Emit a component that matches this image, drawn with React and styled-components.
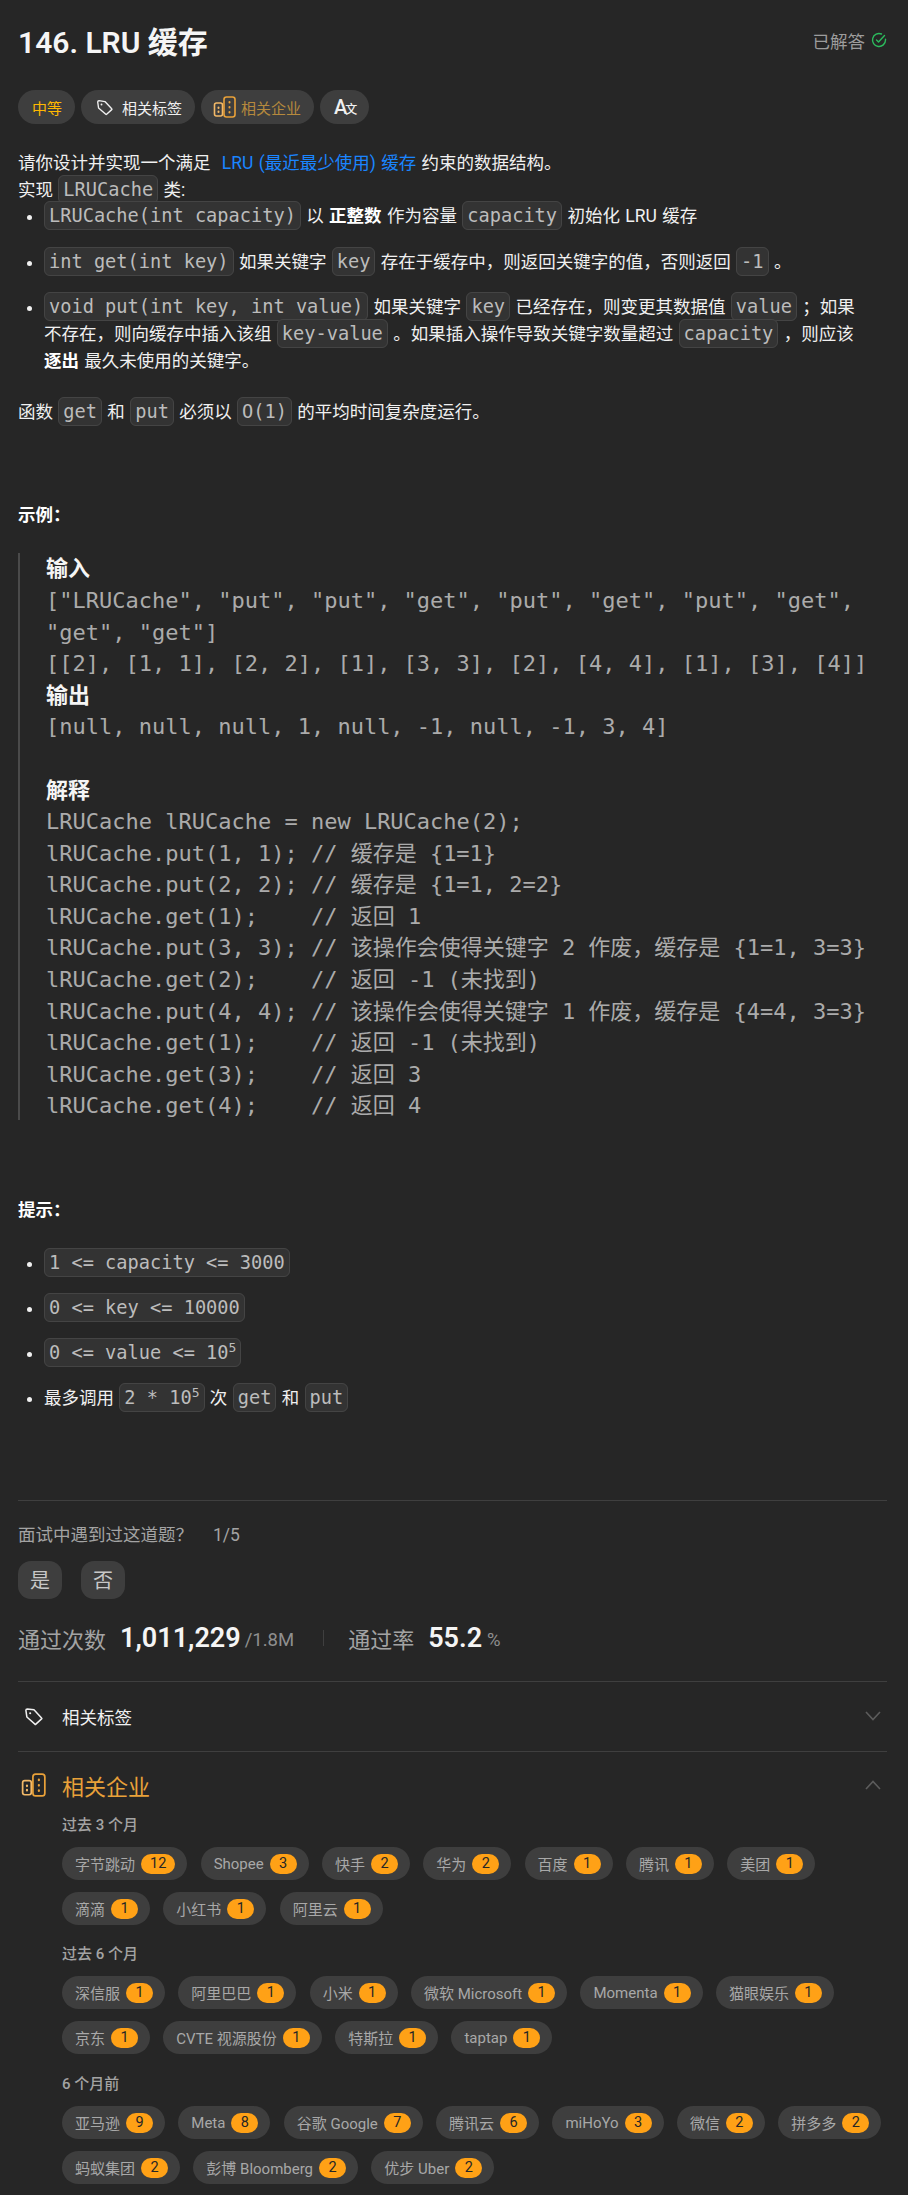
import React from "react";
import styled, { createGlobalStyle } from "styled-components";

const GlobalStyle = createGlobalStyle`
  html, body {
    margin: 0;
    padding: 0;
    background: #262626;
  }
  body {
    font-family: Roboto, "Noto Sans CJK SC", sans-serif;
    color: #eff1f6;
  }
`;

const Page = styled.div`
  width: 908px;
  height: 2195px;
  box-sizing: border-box;
  padding: 0 21px 0 18px;
  overflow: hidden;
`;

const TitleRow = styled.div`
  display: flex;
  align-items: center;
  justify-content: space-between;
  height: 42px;
  padding-top: 19px;
`;

const Title = styled.h1`
  margin: 0;
  font-size: 30px;
  font-weight: 600;
  color: #f5f5f5;
`;

const Solved = styled.div`
  display: flex;
  align-items: center;
  gap: 6px;
  font-size: 17.5px;
  color: #9c9c9c;
`;

const ChipRow = styled.div`
  display: flex;
  gap: 6px;
  margin-top: 29px;
`;

const Chip = styled.div`
  display: flex;
  align-items: center;
  gap: ${props => props.$gap || 10}px;
  height: 34px;
  padding: 0 ${props => props.$right || 13}px 0 ${props => props.$pad || 14}px;
  border-radius: 17px;
  background: #3e3e3e;
  font-size: 15px;
  color: ${props => props.$color || "#f0f0f0"};
`;

const TranslateIcon = styled.span`
  display: inline-flex;
  align-items: baseline;
  font-size: 20px;
  font-weight: 500;
  color: #f0f0f0;
  small {
    font-size: 12px;
    margin-left: -2px;
  }
`;

const Description = styled.div`
  width: 848px;
  margin-top: 26px;
  font-size: 17.5px;
  line-height: 26.6px;
  word-spacing: 1px;
  color: #f0f0f0;
`;

const Line = styled.p`
  margin: ${props => props.$top || 0}px 0 0;
`;

const Link = styled.span`
  margin-left: 6px;
  color: #1a85ff;
`;

const Strong = styled.strong`
  font-weight: 700;
  color: #fff;
`;

const Code = styled.code`
  padding: 3px 4px;
  border: 1px solid #444;
  border-radius: 6px;
  background: #333;
  font-family: "DejaVu Sans Mono", monospace;
  font-size: 18.65px;
  line-height: 1;
  word-spacing: 0;
  color: #bcbcbc;
  sup {
    font-size: 13px;
    line-height: 0;
  }
`;

const List = styled.ul`
  margin: ${props => props.$top || 0}px 0 0;
  padding: 0 0 0 26px;
`;

const Item = styled.li`
  margin-bottom: ${props => props.$gap || 19}px;
`;

const Blockquote = styled.div`
  margin-top: 25px;
  padding-left: 26px;
  border-left: 2px solid #4a4a4a;
  height: 567px;
`;

const Pre = styled.pre`
  margin: 0;
  font-family: "DejaVu Sans Mono", "Noto Sans CJK SC", monospace;
  font-size: 22px;
  line-height: 31.6px;
  color: #ababab;
  b {
    font-family: "Noto Sans CJK SC", sans-serif;
    font-size: 22px;
    font-weight: 700;
    line-height: 1;
    color: #f5f5f5;
  }
`;

const Rule = styled.hr`
  margin: ${props => props.$top || 0}px 0 0;
  border: 0;
  border-top: 1px solid #3f3f3f;
`;

const Muted = styled.div`
  display: flex;
  gap: 20px;
  margin-top: 24px;
  font-size: 17.5px;
  line-height: 20px;
  color: #a3a3a3;
`;

const VoteRow = styled.div`
  display: flex;
  gap: 19px;
  margin-top: 16px;
`;

const Vote = styled.div`
  width: 44px;
  height: 38px;
  border-radius: 13px;
  background: #3e3e3e;
  display: flex;
  align-items: center;
  justify-content: center;
  font-size: 20px;
  color: #c8c8c8;
`;

const Stats = styled.div`
  display: flex;
  align-items: center;
  height: 40px;
  margin-top: 19.5px;
`;

const StatLabel = styled.span`
  font-size: 22px;
  color: #a3a3a3;
  margin-right: 14px;
`;

const StatValue = styled.span`
  font-size: 27px;
  font-weight: 600;
  color: #f5f5f5;
`;

const StatUnit = styled.span`
  font-size: 18.5px;
  color: #8f8f8f;
  margin: 4px 0 0 ${props => props.$left || 4}px;
`;

const StatDivider = styled.span`
  width: 1px;
  height: 16px;
  margin: 0 24px 0 29px;
  background: #3f3f3f;
`;

const Accordion = styled.div`
  display: flex;
  align-items: center;
  justify-content: space-between;
  box-sizing: border-box;
  height: ${props => props.$h}px;
  padding: 0 6px ${props => props.$bottom || 0}px 0;
`;

const AccordionLabel = styled.div`
  display: flex;
  align-items: center;
  font-size: ${props => props.$size}px;
  color: ${props => props.$color};
`;

const IconSlot = styled.span`
  display: flex;
  width: 44px;
  padding-left: ${props => props.$left}px;
  box-sizing: border-box;
`;

const Companies = styled.div`
  padding-left: 44px;
`;

const Period = styled.div`
  margin-top: ${props => props.$top}px;
  font-size: 15px;
  font-weight: 500;
  line-height: 20px;
  color: #a3a3a3;
`;

const Pills = styled.div`
  display: flex;
  flex-wrap: wrap;
  gap: 12.5px 13.3px;
  margin-top: 12.5px;
`;

const Pill = styled.div`
  display: flex;
  align-items: center;
  gap: 6px;
  height: 32.5px;
  padding: 0 12px 0 13px;
  border-radius: 17px;
  background: #3e3e3e;
  font-size: 15px;
  color: #a8a8a8;
  white-space: nowrap;
`;

const Badge = styled.span`
  box-sizing: border-box;
  min-width: 27px;
  height: 20px;
  padding: 0 9px;
  border-radius: 10px;
  background: #ffa116;
  color: #262626;
  font-size: 14.5px;
  line-height: 20px;
  text-align: center;
`;

const TagIcon = ({ size = 18, color = "#f0f0f0" }) => (
  <svg width={size} height={size} viewBox="0 0 20 20" fill="none" stroke={color} strokeWidth="1.6" strokeLinejoin="round">
    <path d="M2 3.5 Q2 2 3.5 2 L10.5 3 L18.5 11.5 Q19 12 18.5 12.5 L12.5 18 Q12 18.5 11.5 18 L3 10.5z" />
    <circle cx="6.5" cy="6.5" r="1.1" fill={color} stroke="none" />
  </svg>
);

const CompanyIcon = ({ size = 24 }) => (
  <svg width={size} height={size} viewBox="0 0 24 24" fill="none" stroke="#e9a139" strokeWidth="1.6" strokeLinecap="round" strokeLinejoin="round">
    <rect x="1.5" y="8" width="8" height="13" rx="2" stroke="#f3b968" />
    <rect x="11" y="2" width="11" height="20" rx="2.5" />
    <path d="M16.5 7v.5M16.5 12v.5M16.5 17v.5" strokeWidth="2" />
    <path d="M5.5 12.5v.5M5.5 16.5v.5" strokeWidth="2" stroke="#f3b968" />
  </svg>
);

const CheckIcon = () => (
  <svg width="16" height="16" viewBox="0 0 16 16" fill="none" stroke="#2cbb5d" strokeWidth="1.4" strokeLinecap="round" strokeLinejoin="round">
    <path d="M14.5 7.2V8A6.5 6.5 0 1 1 10.5 2" />
    <path d="M5.5 8l2 2L13.5 3.5" />
  </svg>
);

const Chevron = ({ up }) => (
  <svg width="16" height="10" viewBox="0 0 16 10" fill="none" stroke="#5c5c5c" strokeWidth="1.6">
    <path d={up ? "M1 9 8 1.5 15 9" : "M1 1l7 7.5L15 1"} />
  </svg>
);

const periods = [
  {
    label: "过去 3 个月",
    top: -7,
    items: [["字节跳动", 12], ["Shopee", 3], ["快手", 2], ["华为", 2], ["百度", 1], ["腾讯", 1], ["美团", 1], ["滴滴", 1], ["小红书", 1], ["阿里云", 1]],
  },
  {
    label: "过去 6 个月",
    top: 19,
    items: [["深信服", 1], ["阿里巴巴", 1], ["小米", 1], ["微软 Microsoft", 1], ["Momenta", 1], ["猫眼娱乐", 1], ["京东", 1], ["CVTE 视源股份", 1], ["特斯拉", 1], ["taptap", 1]],
  },
  {
    label: "6 个月前",
    top: 20,
    items: [["亚马逊", 9], ["Meta", 8], ["谷歌 Google", 7], ["腾讯云", 6], ["miHoYo", 3], ["微信", 2], ["拼多多", 2], ["蚂蚁集团", 2], ["彭博 Bloomberg", 2], ["优步 Uber", 2]],
  },
];

const example = `["LRUCache", "put", "put", "get", "put", "get", "put", "get",
"get", "get"]
[[2], [1, 1], [2, 2], [1], [3, 3], [2], [4, 4], [1], [3], [4]]
`;

const explain = `LRUCache lRUCache = new LRUCache(2);
lRUCache.put(1, 1); // 缓存是 {1=1}
lRUCache.put(2, 2); // 缓存是 {1=1, 2=2}
lRUCache.get(1);    // 返回 1
lRUCache.put(3, 3); // 该操作会使得关键字 2 作废，缓存是 {1=1, 3=3}
lRUCache.get(2);    // 返回 -1 (未找到)
lRUCache.put(4, 4); // 该操作会使得关键字 1 作废，缓存是 {4=4, 3=3}
lRUCache.get(1);    // 返回 -1 (未找到)
lRUCache.get(3);    // 返回 3
lRUCache.get(4);    // 返回 4`;

export default function App() {
  return (
    <Page lang="zh-CN">
      <GlobalStyle />
      <TitleRow>
        <Title>146. LRU 缓存</Title>
        <Solved>
          已解答 <CheckIcon />
        </Solved>
      </TitleRow>

      <ChipRow>
        <Chip $color="#ffb800">中等</Chip>
        <Chip $pad={15} $gap={9}><TagIcon size={17} /> 相关标签</Chip>
        <Chip $gap={4} $pad={12} $color="#b5893d"><CompanyIcon size={24} /> 相关企业</Chip>
        <Chip $right={12}><TranslateIcon>A<small>文</small></TranslateIcon></Chip>
      </ChipRow>

      <Description>
        <Line>请你设计并实现一个满足 <Link>LRU (最近最少使用) 缓存</Link> 约束的数据结构。</Line>
        <Line>实现 <Code>LRUCache</Code> 类:</Line>
        <List>
          <Item><Code>LRUCache(int capacity)</Code> 以 <Strong>正整数</Strong> 作为容量 <Code>capacity</Code> 初始化 LRU 缓存</Item>
          <Item><Code>int get(int key)</Code> 如果关键字 <Code>key</Code> 存在于缓存中，则返回关键字的值，否则返回 <Code>-1</Code> 。</Item>
          <Item><Code>void put(int key, int value)</Code> 如果关键字 <Code>key</Code> 已经存在，则变更其数据值 <Code>value</Code> ；如果不存在，则向缓存中插入该组 <Code>key-value</Code> 。如果插入操作导致关键字数量超过 <Code>capacity</Code> ，则应该 <Strong>逐出</Strong> 最久未使用的关键字。</Item>
        </List>
        <Line $top={25}>函数 <Code>get</Code> 和 <Code>put</Code> 必须以 <Code>O(1)</Code> 的平均时间复杂度运行。</Line>
        <Line $top={76}><Strong>示例：</Strong></Line>
      </Description>

      <Blockquote>
        <Pre>
          <b>输入</b>{"\n"}{example}<b>输出</b>{"\n"}[null, null, null, 1, null, -1, null, -1, 3, 4]{"\n\n"}<b>解释</b>{"\n"}{explain}
        </Pre>
      </Blockquote>

      <Description>
        <Line $top={77}><Strong>提示：</Strong></Line>
        <List $top={26}>
          <Item $gap={18.5}><Code>1 &lt;= capacity &lt;= 3000</Code></Item>
          <Item $gap={18.5}><Code>0 &lt;= key &lt;= 10000</Code></Item>
          <Item $gap={18.5}><Code>0 &lt;= value &lt;= 10<sup>5</sup></Code></Item>
          <Item $gap={18.5}>最多调用 <Code>2 * 10<sup>5</sup></Code> 次 <Code>get</Code> 和 <Code>put</Code></Item>
        </List>
      </Description>

      <Rule $top={88} />
      <Muted>
        <span>面试中遇到过这道题？</span>
        <span>1/5</span>
      </Muted>
      <VoteRow>
        <Vote>是</Vote>
        <Vote>否</Vote>
      </VoteRow>
      <Stats>
        <StatLabel>通过次数</StatLabel>
        <StatValue>1,011,229</StatValue>
        <StatUnit>/1.8M</StatUnit>
        <StatDivider />
        <StatLabel>通过率</StatLabel>
        <StatValue>55.2</StatValue>
        <StatUnit $left={5}>%</StatUnit>
      </Stats>
      <Rule $top={22.5} />
      <Accordion $h={69}>
        <AccordionLabel $size={17.5} $color="#f0f0f0">
          <IconSlot $left={6}><TagIcon size={19} /></IconSlot>
          相关标签
        </AccordionLabel>
        <Chevron />
      </Accordion>
      <Rule />
      <Accordion $h={70} $bottom={4}>
        <AccordionLabel $size={22} $color="#e9a139">
          <IconSlot $left={3}><CompanyIcon size={26} /></IconSlot>
          相关企业
        </AccordionLabel>
        <Chevron up />
      </Accordion>
      <Companies>
        {periods.map(period => (
          <div key={period.label}>
            <Period $top={period.top}>{period.label}</Period>
            <Pills>
              {period.items.map(([name, count]) => (
                <Pill key={name}>
                  {name}
                  <Badge>{count}</Badge>
                </Pill>
              ))}
            </Pills>
          </div>
        ))}
      </Companies>
    </Page>
  );
}
